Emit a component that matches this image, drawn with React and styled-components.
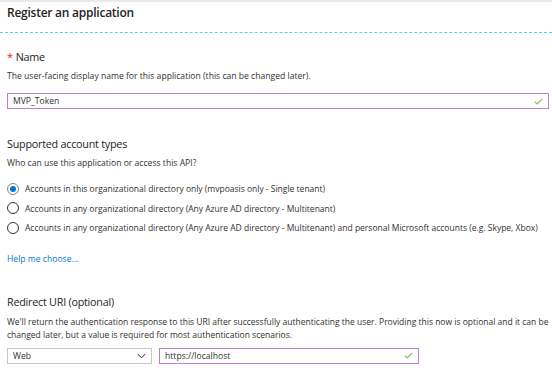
import React from "react";
import styled, { createGlobalStyle } from "styled-components";

const Global = createGlobalStyle`
  html, body { margin: 0; padding: 0; background: #fff; }
  body { font-family: "Open Sans", "Noto Sans", sans-serif; color: #323130; }
  * { box-sizing: border-box; }
`;

const Page = styled.div`
  width: 552px;
  height: 374px;
  overflow: hidden;
  border-top: 2px solid #ebebeb;
`;

const Header = styled.div`
  height: 31px;
  padding: 0 7px;
  border-bottom: 1px dashed #5ccbf0;
`;

const Title = styled.h1`
  margin: 0;
  font-size: 12px;
  line-height: 22px;
  font-weight: 600;
  color: #252423;
  letter-spacing: -0.25px;
`;

const Body = styled.div`
  padding: 0 3px 0 7px;
  display: flex;
  flex-direction: column;
`;

const SectionTitle = styled.div`
  margin-top: ${(p) => p.$mt}px;
  font-size: 10.8px;
  line-height: 16px;
  color: #252423;
  letter-spacing: -0.25px;
`;

const Required = styled.span`
  color: #e81123;
  margin-right: 3px;
`;

const Text = styled.div`
  margin-top: ${(p) => p.$mt}px;
  font-size: ${(p) => p.$fs || 8.6}px;
  line-height: ${(p) => p.$lh || 12}px;
  color: #323130;
`;

const Field = styled.div`
  margin-top: ${(p) => p.$mt || 0}px;
  width: ${(p) => (p.$w ? `${p.$w}px` : "auto")};
  height: 16px;
  border: 1px solid ${(p) => (p.$active ? "#c07fd6" : "#c8c6c4")};
  display: flex;
  align-items: center;
  justify-content: space-between;
  padding: 0 5px;
  font-size: 8.6px;
  color: #323130;
  background: #fff;
`;

const Row = styled.div`
  margin-top: ${(p) => p.$mt}px;
  display: flex;
  gap: 7px;
`;

const RadioList = styled.div`
  margin-top: 10px;
  display: flex;
  flex-direction: column;
`;

const RadioRow = styled.label`
  height: 19.5px;
  display: flex;
  align-items: center;
  gap: 6px;
  font-size: 8.5px;
  color: #323130;
  white-space: nowrap;
`;

const Circle = styled.span`
  width: 12px;
  height: 12px;
  border-radius: 50%;
  border: 1px solid ${(p) => (p.$checked ? "#8a8886" : "#323130")};
  display: flex;
  align-items: center;
  justify-content: center;
  flex: none;
  &::after {
    content: "";
    width: 6px;
    height: 6px;
    border-radius: 50%;
    background: ${(p) => (p.$checked ? "#0078d4" : "transparent")};
  }
`;

const Link = styled.a`
  margin-top: 15px;
  font-size: 8.6px;
  line-height: 12px;
  color: #0078d4;
  text-decoration: none;
`;

const Check = () => (
  <svg width="9" height="7" viewBox="0 0 9 7">
    <path d="M0.8 3.6 L3.2 6 L8.2 0.8" fill="none" stroke="#7fbf4d" strokeWidth="1.1" />
  </svg>
);

const Chevron = () => (
  <svg width="9" height="6" viewBox="0 0 9 6">
    <path d="M0.5 0.8 L4.5 4.8 L8.5 0.8" fill="none" stroke="#323130" strokeWidth="1" />
  </svg>
);

export default function App() {
  return (
    <>
      <Global />
      <Page>
        <Header>
          <Title>Register an application</Title>
        </Header>
        <Body>
          <SectionTitle $mt={16}>
            <Required>*</Required>Name
          </SectionTitle>
          <Text $mt={5}>
            The user-facing display name for this application (this can be changed later).
          </Text>
          <Field $mt={11} $active>
            <span>MVP_Token</span>
            <Check />
          </Field>

          <SectionTitle $mt={27}>Supported account types</SectionTitle>
          <Text $mt={5}>Who can use this application or access this API?</Text>
          <RadioList>
            <RadioRow>
              <Circle $checked />
              Accounts in this organizational directory only (mvpoasis only - Single tenant)
            </RadioRow>
            <RadioRow>
              <Circle />
              Accounts in any organizational directory (Any Azure AD directory - Multitenant)
            </RadioRow>
            <RadioRow>
              <Circle />
              Accounts in any organizational directory (Any Azure AD directory - Multitenant) and personal Microsoft accounts (e.g. Skype, Xbox)
            </RadioRow>
          </RadioList>
          <Link href="#">Help me choose...</Link>

          <SectionTitle $mt={29}>Redirect URI (optional)</SectionTitle>
          <Text $mt={5} $lh={13} $fs={8.5}>
            We'll return the authentication response to this URI after successfully authenticating the user. Providing this now is optional and it can be changed later, but a value is required for most authentication scenarios.
          </Text>
          <Row $mt={7}>
            <Field $w={145}>
              <span>Web</span>
              <Chevron />
            </Field>
            <Field $w={260} $active>
              <span>https://localhost</span>
              <Check />
            </Field>
          </Row>
        </Body>
      </Page>
    </>
  );
}
